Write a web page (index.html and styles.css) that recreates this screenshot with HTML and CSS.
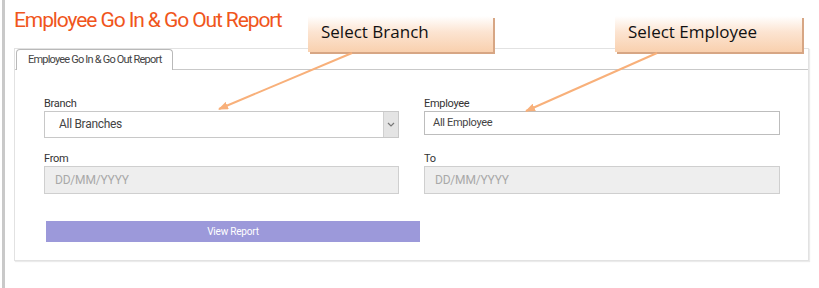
FILE: index.html
```html
<!DOCTYPE html>
<html lang="en">
<head>
  <meta charset="utf-8" />
  <title>Employee Go In &amp; Go Out Report</title>
  <link rel="stylesheet" href="styles.css">
</head>
<body>
  <div class="page">
    <h1 class="page-title">Employee Go In &amp; Go Out Report</h1>

    <div class="panel">
      <div class="tabs">
        <div class="tab">Employee Go In &amp; Go Out Report</div>
      </div>

      <form class="report-form">
        <div class="field">
          <label class="field-label">Branch</label>
          <div class="select-box">
            <span class="select-value">All Branches</span>
            <span class="select-arrow">
              <svg width="8" height="5" viewBox="0 0 8 5"><path d="M1 1 L4 4 L7 1" fill="none" stroke="#777" stroke-width="1.2"/></svg>
            </span>
          </div>
        </div>
        <div class="field">
          <label class="field-label">Employee</label>
          <div class="text-box">All Employee</div>
        </div>
        <div class="field">
          <label class="field-label">From</label>
          <div class="date-box">DD/MM/YYYY</div>
        </div>
        <div class="field">
          <label class="field-label">To</label>
          <div class="date-box">DD/MM/YYYY</div>
        </div>
        <div class="actions">
          <button type="button" class="btn-report">View Report</button>
        </div>
      </form>
    </div>

    <!-- annotation callouts -->
    <div class="callout callout-branch">Select Branch</div>
    <div class="callout callout-employee">Select Employee</div>
    <svg class="arrows" width="819" height="288" viewBox="0 0 819 288">
      <defs>
        <marker id="head" markerWidth="10" markerHeight="8" refX="9" refY="4" orient="auto" markerUnits="userSpaceOnUse">
          <path d="M0 0 L10 4 L0 8 Z" fill="#f8b07a"/>
        </marker>
      </defs>
      <line x1="352" y1="53" x2="219" y2="109" stroke="#f8b07a" stroke-width="2" marker-end="url(#head)"/>
      <line x1="657" y1="53" x2="526" y2="111" stroke="#f8b07a" stroke-width="2" marker-end="url(#head)"/>
    </svg>
  </div>
</body>
</html>
```

FILE: styles.css
```css
body {
  margin: 0;
  background-color: #fff;
  font-family: Roboto, "Liberation Sans", sans-serif;
  color: #333;
}
.page {
  position: relative;
  width: 814px;
  height: 288px;
  margin-left: 2px;
  border-left: 3px solid #c9c9c9;
  box-sizing: border-box;
  padding-left: 9px;
  overflow: hidden;
}
.page-title {
  margin: 0;
  padding-top: 8px;
  height: 48px;
  box-sizing: border-box;
  font-size: 21px;
  font-weight: 400;
  line-height: 24px;
  letter-spacing: -1.1px;
  color: #f0561c;
}
.panel {
  width: 795px;
  height: 213px;
  box-sizing: border-box;
  border: 1px solid #e2e2e2;
  box-shadow: 1px 1px 1px rgba(0, 0, 0, 0.08);
  background: #fff;
}
.tabs {
  display: flex;
  height: 21px;
  padding-left: 1px;
  border-bottom: 1px solid #c9c9c9;
  box-sizing: border-box;
}
.tab {
  height: 21px;
  box-sizing: border-box;
  padding: 0 11px;
  border: 1px solid #b9b9b9;
  border-bottom: none;
  border-radius: 4px 4px 0 0;
  background: #fff;
  font-size: 11px;
  line-height: 19px;
  letter-spacing: -0.8px;
  color: #444;
}
.report-form {
  display: grid;
  grid-template-columns: 355px 356px;
  column-gap: 25px;
  row-gap: 14px;
  padding: 27px 28px 0 29px;
}
.field-label {
  display: block;
  height: 14px;
  font-size: 11px;
  line-height: 14px;
  letter-spacing: -0.3px;
  color: #333;
}
.select-box {
  display: flex;
  height: 27px;
  box-sizing: border-box;
  border: 1px solid #c8c8c8;
  background: #fff;
}
.select-value {
  flex: 1;
  padding-left: 14px;
  font-size: 12px;
  line-height: 25px;
  letter-spacing: -0.3px;
  color: #444;
}
.select-arrow {
  width: 14px;
  display: flex;
  align-items: center;
  justify-content: center;
  background: #e4e4e4;
  border-left: 1px solid #d0d0d0;
}
.text-box {
  height: 24px;
  box-sizing: border-box;
  border: 1px solid #bdbdbd;
  padding-left: 8px;
  font-size: 11px;
  line-height: 22px;
  letter-spacing: -0.3px;
  color: #444;
}
.date-box {
  height: 28px;
  box-sizing: border-box;
  border: 1px solid #cfcfcf;
  background: #eeeeee;
  padding-left: 10px;
  font-size: 12px;
  line-height: 26px;
  letter-spacing: -0.2px;
  color: #a9a9a9;
}
.actions {
  grid-column: 1 / 3;
  padding-top: 13px;
  padding-left: 2px;
}
.btn-report {
  display: block;
  width: 374px;
  height: 21px;
  border: none;
  background: #9c99da;
  color: #fff;
  font-family: Roboto, "Liberation Sans", sans-serif;
  font-size: 10px;
  letter-spacing: -0.2px;
  padding: 0;
}
.callout {
  position: absolute;
  top: 16px;
  height: 36px;
  box-sizing: border-box;
  padding-left: 13px;
  background: linear-gradient(to bottom, #ffffff 0%, #fce4d1 45%, #f9d0ae 100%);
  box-shadow: 2px 2px 0 #d7a684;
  font-family: "Open Sans", "Liberation Sans", sans-serif;
  font-size: 17px;
  line-height: 32px;
  color: #111;
}
.callout-branch {
  left: 303px;
  width: 185px;
}
.callout-employee {
  left: 610px;
  width: 187px;
}
.arrows {
  position: absolute;
  left: -5px;
  top: 0;
  pointer-events: none;
}
```
